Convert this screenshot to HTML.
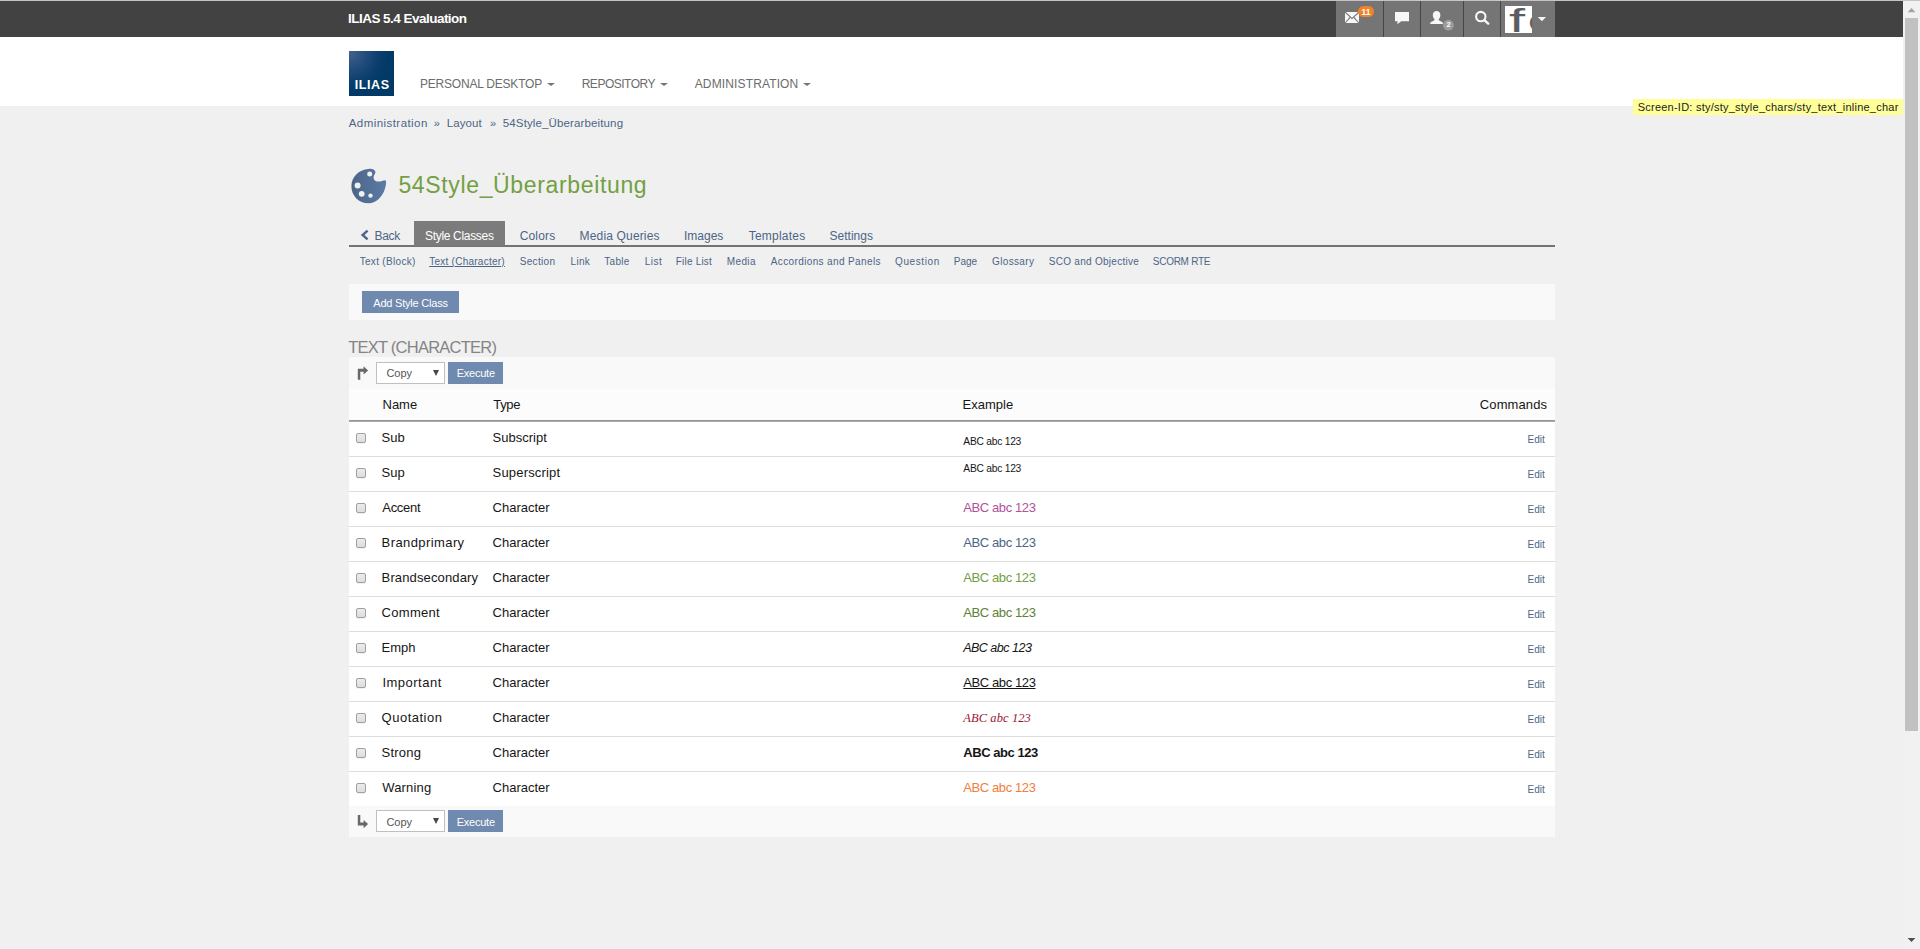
<!DOCTYPE html>
<html lang="en">
<head>
<meta charset="utf-8">
<title>ILIAS 5.4 Evaluation</title>
<style>
html,body{margin:0;padding:0}
body{width:1920px;height:949px;overflow:hidden;position:relative;background:#f0f0f0;color:#161616;
 font-family:"Liberation Sans",sans-serif;font-size:13px;line-height:20px}
*{box-sizing:border-box}
.t{position:absolute;white-space:nowrap;line-height:20px;height:20px;display:block;margin:0;font-weight:normal;text-decoration:none}
.a{position:absolute}
.lnk{color:#4c6586}
#topline{left:0;top:0;width:1920px;height:1px;background:#c4c4c8;z-index:5}
#topbar{left:0;top:0;width:1903px;height:37px;background:#424242}
#topicons{left:1336px;top:0;width:219px;height:37px;background:#757575}
.sep{position:absolute;top:0;width:1px;height:37px;background:#454545}
#mainheader{left:0;top:37px;width:1903px;height:69px;background:#fff}
#logo{left:349px;top:51px;width:45px;height:45px;background:radial-gradient(ellipse 38px 40px at 2px 2px,#41618f 0%,#214c7b 40%,#0a3e6d 75%,#013a67 100%)}
.caret{position:absolute;width:0;height:0;border-left:4px solid transparent;border-right:4px solid transparent;border-top:3.6px solid #757575}
#screenid{left:1633px;top:99px;width:270px;height:16px;background:#ffff99}
#tabline{left:349px;top:245px;width:1206px;height:2px;background:#737373}
#acttab{left:414px;top:221px;width:91px;height:25px;background:#7b7b7b}
#toolbar{left:349px;top:284px;width:1206px;height:36px;background:#f9f9f9}
.btn{position:absolute;background:#6f89af}
#tbl{left:349px;top:357px;width:1206px;height:480px;background:#fff}
#bar1{left:349px;top:357px;width:1206px;height:32px;background:#f9f9f9}
#hdr{left:349px;top:389px;width:1206px;height:33px;background:#fcfcfc}
#bar2{left:349px;top:806px;width:1206px;height:31px;background:#f9f9f9}
#hline{left:349px;top:420px;width:1206px;height:2px;background:linear-gradient(#8c8c8c,#b4b4b4)}
.rl{position:absolute;left:349px;width:1206px;height:1px;background:#dddddd}
.sel{position:absolute;left:376px;width:69px;height:22px;background:#fff;border:1px solid #c0c0c0}
.sel i{position:absolute;left:56px;top:7px;width:0;height:0;border-left:3px solid transparent;border-right:3px solid transparent;border-top:6px solid #484848}
.cb{position:absolute;left:356px;width:10px;height:10px;border:1px solid #a0a0a0;border-radius:2px;background:linear-gradient(#ececec,#dddddd);box-shadow:0 1px 0 rgba(0,0,0,0.05)}
#sb{left:1903px;top:1px;width:17px;height:948px;background:#f1f1f1}
#sbthumb{left:1905px;top:18px;width:13px;height:713px;background:#c1c1c1}
</style>
</head>
<body>
<div class="a" id="topbar"></div>
<div class="a" id="topicons"><div class="sep" style="left:47px"></div><div class="sep" style="left:84px"></div><div class="sep" style="left:127px"></div><div class="sep" style="left:164px"></div></div>
<div class="a" id="topline"></div>
<span id="toptitle" class="t" style="left:348.00px;top:9px;font-size:13.5px;letter-spacing:-0.526px;color:#fff;font-weight:bold;">ILIAS 5.4 Evaluation</span>

<svg class="a" style="left:1336px;top:0" width="219" height="37" viewBox="1336 0 219 37">
 <!-- mail -->
 <rect x="1345" y="12" width="14" height="11" fill="#f7f7f7"/>
 <path d="M1345 12 L1352 18.6 L1359 12 M1345 23 L1350.2 17.4 M1359 23 L1353.8 17.4" stroke="#757575" stroke-width="1.1" fill="none"/>
 <rect x="1358" y="6" width="16" height="11" rx="5.5" fill="#f0832a"/>
 <!-- chat -->
 <path d="M1395 12 H1409 V21.3 H1401.2 L1397.3 24.2 L1397.6 21.3 H1395 Z" fill="#f7f7f7"/>
 <!-- user -->
 <path d="M1436.6 10.9 C1439 10.9 1440.5 12.7 1440.4 15.2 C1440.3 17 1439.6 18.3 1438.7 19.1 C1438.6 20 1438.9 20.6 1440 21 C1441.8 21.7 1443 22.3 1443.2 24 H1430 C1430.2 22.3 1431.4 21.7 1433.2 21 C1434.3 20.6 1434.6 20 1434.5 19.1 C1433.6 18.3 1432.9 17 1432.8 15.2 C1432.7 12.7 1434.2 10.9 1436.6 10.9 Z" fill="#f7f7f7"/>
 <circle cx="1448.4" cy="25.2" r="5.4" fill="#9c9c9c"/>
 <!-- search -->
 <circle cx="1480.8" cy="16.6" r="4.7" fill="none" stroke="#f7f7f7" stroke-width="2.1"/>
 <path d="M1484.3 20.2 L1488.2 23.6" stroke="#f7f7f7" stroke-width="2.4" stroke-linecap="round"/>
 <!-- caret -->
 <path d="M1537.8 17 H1546 L1541.9 21.3 Z" fill="#f7f7f7"/>
</svg>

<div class="a" id="avatar" style="left:1505px;top:6px;width:27px;height:27px;background:#fff;overflow:hidden"><span class="a" style="left:3.5px;top:-5px;font-size:34px;line-height:38px;color:#5d5d61;white-space:nowrap;transform:scaleX(1.7);transform-origin:0 0;letter-spacing:1.5px">fo</span></div>
<span class="t" style="left:1358px;top:1.6px;width:16px;text-align:center;font-size:8.5px;font-weight:bold;color:#fff;letter-spacing:0px">11</span>
<span class="t" style="left:1443px;top:15px;width:11px;text-align:center;font-size:7.5px;font-weight:bold;color:#fff">2</span>
<div class="a" id="mainheader"></div>
<div class="a" id="logo"></div>
<span class="t" style="left:354.7px;top:75px;font-size:12.5px;font-weight:bold;color:#fff;letter-spacing:0.6px">ILIAS</span>
<span id="mm1" class="t" style="left:420.00px;top:74px;font-size:12px;letter-spacing:-0.214px;color:#6c6c6c;">PERSONAL DESKTOP</span>
<span id="mm2" class="t" style="left:581.70px;top:74px;font-size:12px;letter-spacing:-0.488px;color:#6c6c6c;">REPOSITORY</span>
<span id="mm3" class="t" style="left:694.70px;top:74px;font-size:12px;letter-spacing:0.138px;color:#6c6c6c;">ADMINISTRATION</span>
<i class="caret" style="left:546.6px;top:82.6px"></i>
<i class="caret" style="left:659.8px;top:82.6px"></i>
<i class="caret" style="left:803.1px;top:82.6px"></i>
<div class="a" id="screenid"></div>
<span id="scr" class="t" style="left:1637.70px;top:97px;font-size:11px;letter-spacing:0.236px;color:#222;">Screen-ID: sty/sty_style_chars/sty_text_inline_char</span>
<a id="bc1" class="t lnk" style="left:348.70px;top:113px;font-size:11.5px;letter-spacing:0.446px;">Administration</a>
<a id="bcs1" class="t lnk" style="left:433.70px;top:113px;font-size:11px;">»</a>
<a id="bc2" class="t lnk" style="left:446.70px;top:113px;font-size:11.5px;letter-spacing:0.120px;">Layout</a>
<a id="bcs2" class="t lnk" style="left:490.00px;top:113px;font-size:11px;">»</a>
<a id="bc3" class="t lnk" style="left:502.80px;top:113px;font-size:11.5px;letter-spacing:0.130px;">54Style_Überarbeitung</a>

<svg class="a" style="left:349px;top:166px" width="40" height="40" viewBox="349 166 40 40">
 <defs><linearGradient id="pg" x1="0" y1="0" x2="1" y2="0"><stop offset="0" stop-color="#4c6586"/><stop offset="1" stop-color="#5b7ba6"/></linearGradient></defs>
 <path d="M368.5 168.9 C372.6 168.6 375.6 170.2 375.4 172.6 C375.2 174.6 373.2 175.6 373.6 178.2 C374 180.9 377 182 380 181.4 C382.6 180.9 384.6 179.4 385.6 180.6 C386.6 181.9 386 186.8 384.2 191 C381.6 197.2 376 203.2 368.6 203.3 C359 203.4 351.4 195.8 351.4 186.2 C351.4 176.9 358.6 169.6 368.5 168.9 Z" fill="url(#pg)"/>
 <circle cx="369.7" cy="173.9" r="2.5" fill="#f0f0f0"/>
 <circle cx="357.6" cy="185.5" r="3" fill="#f0f0f0"/>
 <circle cx="361.7" cy="193.8" r="2.9" fill="#f0f0f0"/>
 <circle cx="370.5" cy="195.6" r="2.2" fill="#f0f0f0"/>
</svg>

<h1 id="title" class="t" style="left:398.40px;top:175px;font-size:23px;letter-spacing:0.650px;color:#73a043;">54Style_Überarbeitung</h1>
<div class="a" id="tabline"></div><div class="a" id="acttab"></div>
<svg class="a" style="left:359px;top:228px" width="12" height="14" viewBox="359 228 12 14"><path d="M367.6 230.6 L362.6 235 L367.6 239.4" stroke="#4c6586" stroke-width="2.4" fill="none"/></svg>
<a id="tab0" class="t lnk" style="left:374.50px;top:226px;font-size:12px;letter-spacing:-0.300px;">Back</a>
<span id="tab1" class="t" style="left:425.00px;top:226px;font-size:12px;letter-spacing:-0.317px;color:#fff;">Style Classes</span>
<a id="tab2" class="t lnk" style="left:519.70px;top:226px;font-size:12px;letter-spacing:0.160px;">Colors</a>
<a id="tab3" class="t lnk" style="left:579.60px;top:226px;font-size:12px;letter-spacing:0.158px;">Media Queries</a>
<a id="tab4" class="t lnk" style="left:684.00px;top:226px;font-size:12px;">Images</a>
<a id="tab5" class="t lnk" style="left:748.70px;top:226px;font-size:12px;letter-spacing:0.225px;">Templates</a>
<a id="tab6" class="t lnk" style="left:829.60px;top:226px;font-size:12px;">Settings</a>
<a id="sub0" class="t lnk" style="left:359.70px;top:252px;font-size:10px;letter-spacing:0.310px;">Text (Block)</a>
<a id="sub1" class="t lnk" style="left:429.20px;top:252px;font-size:10px;letter-spacing:0.253px;text-decoration:underline;">Text (Character)</a>
<a id="sub2" class="t lnk" style="left:519.70px;top:252px;font-size:10px;letter-spacing:0.334px;">Section</a>
<a id="sub3" class="t lnk" style="left:570.50px;top:252px;font-size:10px;letter-spacing:0.333px;">Link</a>
<a id="sub4" class="t lnk" style="left:604.30px;top:252px;font-size:10px;letter-spacing:0.275px;">Table</a>
<a id="sub5" class="t lnk" style="left:644.70px;top:252px;font-size:10px;letter-spacing:0.500px;">List</a>
<a id="sub6" class="t lnk" style="left:675.80px;top:252px;font-size:10px;letter-spacing:0.188px;">File List</a>
<a id="sub7" class="t lnk" style="left:726.70px;top:252px;font-size:10px;letter-spacing:0.400px;">Media</a>
<a id="sub8" class="t lnk" style="left:770.80px;top:252px;font-size:10px;letter-spacing:0.370px;">Accordions and Panels</a>
<a id="sub9" class="t lnk" style="left:895.00px;top:252px;font-size:10px;letter-spacing:0.600px;">Question</a>
<a id="sub10" class="t lnk" style="left:953.80px;top:252px;font-size:10px;">Page</a>
<a id="sub11" class="t lnk" style="left:992.10px;top:252px;font-size:10px;letter-spacing:0.343px;">Glossary</a>
<a id="sub12" class="t lnk" style="left:1048.80px;top:252px;font-size:10px;letter-spacing:0.275px;">SCO and Objective</a>
<a id="sub13" class="t lnk" style="left:1152.80px;top:252px;font-size:10px;letter-spacing:-0.273px;">SCORM RTE</a>
<div class="a" id="toolbar"></div><div class="btn" style="left:362px;top:291px;width:97px;height:22px"></div>
<span id="addbtn" class="t" style="left:373.30px;top:293px;font-size:11px;letter-spacing:-0.214px;color:#fff;">Add Style Class</span>
<h3 id="h3" class="t" style="left:348.20px;top:337px;font-size:16.5px;letter-spacing:-0.760px;color:#848484;">TEXT (CHARACTER)</h3>
<div class="a" id="tbl"></div><div class="a" id="bar1"></div><div class="a" id="hdr"></div><div class="a" id="bar2"></div><div class="a" id="hline"></div>
<svg class="a" style="left:356px;top:364px" width="14" height="17" viewBox="356 364 14 17"><path d="M357.8 379.8 V368.8 H363.6 V366.2 L368.1 370.4 L363.6 374.6 V371.8 H360.3 V379.8 Z" fill="#686868"/></svg>
<svg class="a" style="left:356px;top:813px" width="14" height="17" viewBox="356 813 14 17"><path d="M357.8 815 V825.4 H363.6 V828.2 L368.1 824 L363.6 819.9 V822.6 H360.3 V815 Z" fill="#686868"/></svg>
<div class="sel" style="top:362px"><i></i></div><div class="btn" style="left:448px;top:362px;width:55px;height:22px"></div>
<span id="copy0" class="t" style="left:386.40px;top:363px;font-size:11px;color:#555;">Copy</span>
<span id="exe0" class="t" style="left:456.70px;top:363px;font-size:11px;letter-spacing:-0.234px;color:#fff;">Execute</span>
<div class="sel" style="top:810px"><i></i></div><div class="btn" style="left:448px;top:810px;width:55px;height:22px"></div>
<span id="copy1" class="t" style="left:386.40px;top:812px;font-size:11px;color:#555;">Copy</span>
<span id="exe1" class="t" style="left:456.70px;top:812px;font-size:11px;letter-spacing:-0.234px;color:#fff;">Execute</span>
<span id="th0" class="t" style="left:382.50px;top:395px;font-size:13px;">Name</span>
<span id="th1" class="t" style="left:493.30px;top:395px;font-size:13px;letter-spacing:-0.333px;">Type</span>
<span id="th2" class="t" style="left:962.60px;top:395px;font-size:13px;">Example</span>
<span id="th3" class="t" style="left:1479.80px;top:395px;font-size:13px;letter-spacing:0.114px;">Commands</span>
<div class="cb" style="top:433px"></div>
<span id="n0" class="t" style="left:381.60px;top:428px;font-size:13px;">Sub</span>
<span id="ty0" class="t" style="left:492.60px;top:428px;font-size:13px;">Subscript</span>
<span id="ex0" class="t" style="left:963.30px;top:432px;font-size:10.25px;letter-spacing:-0.240px;">ABC abc 123</span>
<a id="ed0" class="t lnk" style="left:1527.60px;top:430px;font-size:10px;">Edit</a>
<div class="rl" style="top:456px"></div>
<div class="cb" style="top:468px"></div>
<span id="n1" class="t" style="left:381.60px;top:463px;font-size:13px;">Sup</span>
<span id="ty1" class="t" style="left:492.60px;top:463px;font-size:13px;letter-spacing:0.170px;">Superscript</span>
<span id="ex1" class="t" style="left:963.30px;top:459px;font-size:10.25px;letter-spacing:-0.240px;">ABC abc 123</span>
<a id="ed1" class="t lnk" style="left:1527.60px;top:465px;font-size:10px;">Edit</a>
<div class="rl" style="top:491px"></div>
<div class="cb" style="top:503px"></div>
<span id="n2" class="t" style="left:382.30px;top:498px;font-size:13px;letter-spacing:-0.300px;">Accent</span>
<span id="ty2" class="t" style="left:492.60px;top:498px;font-size:13px;">Character</span>
<span id="ex2" class="t" style="left:963.30px;top:498px;font-size:13px;letter-spacing:-0.400px;color:#b5509b;">ABC abc 123</span>
<a id="ed2" class="t lnk" style="left:1527.60px;top:500px;font-size:10px;">Edit</a>
<div class="rl" style="top:526px"></div>
<div class="cb" style="top:538px"></div>
<span id="n3" class="t" style="left:381.60px;top:533px;font-size:13px;letter-spacing:0.409px;">Brandprimary</span>
<span id="ty3" class="t" style="left:492.60px;top:533px;font-size:13px;">Character</span>
<span id="ex3" class="t" style="left:963.30px;top:533px;font-size:13px;letter-spacing:-0.400px;color:#4c6586;">ABC abc 123</span>
<a id="ed3" class="t lnk" style="left:1527.60px;top:535px;font-size:10px;">Edit</a>
<div class="rl" style="top:561px"></div>
<div class="cb" style="top:573px"></div>
<span id="n4" class="t" style="left:381.60px;top:568px;font-size:13px;letter-spacing:0.131px;">Brandsecondary</span>
<span id="ty4" class="t" style="left:492.60px;top:568px;font-size:13px;">Character</span>
<span id="ex4" class="t" style="left:963.30px;top:568px;font-size:13px;letter-spacing:-0.400px;color:#73a043;">ABC abc 123</span>
<a id="ed4" class="t lnk" style="left:1527.60px;top:570px;font-size:10px;">Edit</a>
<div class="rl" style="top:596px"></div>
<div class="cb" style="top:608px"></div>
<span id="n5" class="t" style="left:381.60px;top:603px;font-size:13px;letter-spacing:0.283px;">Comment</span>
<span id="ty5" class="t" style="left:492.60px;top:603px;font-size:13px;">Character</span>
<span id="ex5" class="t" style="left:963.30px;top:603px;font-size:13px;letter-spacing:-0.400px;color:#5d8234;">ABC abc 123</span>
<a id="ed5" class="t lnk" style="left:1527.60px;top:605px;font-size:10px;">Edit</a>
<div class="rl" style="top:631px"></div>
<div class="cb" style="top:643px"></div>
<span id="n6" class="t" style="left:381.60px;top:638px;font-size:13px;">Emph</span>
<span id="ty6" class="t" style="left:492.60px;top:638px;font-size:13px;">Character</span>
<span id="ex6" class="t" style="left:963.20px;top:638px;font-size:12.5px;letter-spacing:-0.500px;font-style:italic;">ABC abc 123</span>
<a id="ed6" class="t lnk" style="left:1527.60px;top:640px;font-size:10px;">Edit</a>
<div class="rl" style="top:666px"></div>
<div class="cb" style="top:678px"></div>
<span id="n7" class="t" style="left:382.40px;top:673px;font-size:13px;letter-spacing:0.500px;">Important</span>
<span id="ty7" class="t" style="left:492.60px;top:673px;font-size:13px;">Character</span>
<span id="ex7" class="t" style="left:963.30px;top:673px;font-size:13px;letter-spacing:-0.400px;text-decoration:underline;">ABC abc 123</span>
<a id="ed7" class="t lnk" style="left:1527.60px;top:675px;font-size:10px;">Edit</a>
<div class="rl" style="top:701px"></div>
<div class="cb" style="top:713px"></div>
<span id="n8" class="t" style="left:381.60px;top:708px;font-size:13px;letter-spacing:0.487px;">Quotation</span>
<span id="ty8" class="t" style="left:492.60px;top:708px;font-size:13px;">Character</span>
<span id="ex8" class="t" style="left:963.20px;top:708px;font-size:12.5px;letter-spacing:0.100px;font-family:'Liberation Serif',serif;font-style:italic;color:#a0152d;">ABC abc 123</span>
<a id="ed8" class="t lnk" style="left:1527.60px;top:710px;font-size:10px;">Edit</a>
<div class="rl" style="top:736px"></div>
<div class="cb" style="top:748px"></div>
<span id="n9" class="t" style="left:381.60px;top:743px;font-size:13px;letter-spacing:0.200px;">Strong</span>
<span id="ty9" class="t" style="left:492.60px;top:743px;font-size:13px;">Character</span>
<span id="ex9" class="t" style="left:963.30px;top:743px;font-size:13px;letter-spacing:-0.460px;font-weight:bold;">ABC abc 123</span>
<a id="ed9" class="t lnk" style="left:1527.60px;top:745px;font-size:10px;">Edit</a>
<div class="rl" style="top:771px"></div>
<div class="cb" style="top:783px"></div>
<span id="n10" class="t" style="left:382.30px;top:778px;font-size:13px;letter-spacing:0.150px;">Warning</span>
<span id="ty10" class="t" style="left:492.60px;top:778px;font-size:13px;">Character</span>
<span id="ex10" class="t" style="left:963.30px;top:778px;font-size:13px;letter-spacing:-0.400px;color:#f27d3c;">ABC abc 123</span>
<a id="ed10" class="t lnk" style="left:1527.60px;top:780px;font-size:10px;">Edit</a>
<div class="a" id="sb"></div><div class="a" id="sbthumb"></div>
<svg class="a" style="left:1903px;top:0" width="17" height="949" viewBox="1903 0 17 949"><path d="M1907.6 12.2 L1911.5 7.9 L1915.4 12.2 Z" fill="#a3a3a3"/><path d="M1907.6 938 L1915.4 938 L1911.5 942 Z" fill="#505050"/></svg>
</body>
</html>
